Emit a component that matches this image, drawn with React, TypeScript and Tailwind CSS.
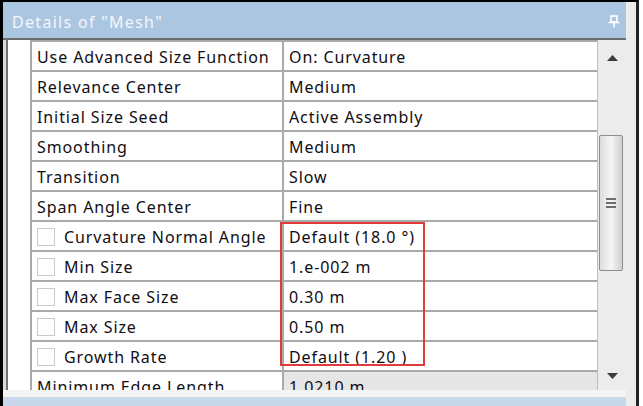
import React from "react";

type Row = { label: string; value: string; check?: boolean; readOnly?: boolean };

const rows: Row[] = [
  { label: "Use Advanced Size Function", value: "On: Curvature" },
  { label: "Relevance Center", value: "Medium" },
  { label: "Initial Size Seed", value: "Active Assembly" },
  { label: "Smoothing", value: "Medium" },
  { label: "Transition", value: "Slow" },
  { label: "Span Angle Center", value: "Fine" },
  { label: "Curvature Normal Angle", value: "Default (18.0 °)", check: true },
  { label: "Min Size", value: "1.e-002 m", check: true },
  { label: "Max Face Size", value: "0.30 m", check: true },
  { label: "Max Size", value: "0.50 m", check: true },
  { label: "Growth Rate", value: "Default (1.20 )", check: true },
  { label: "Minimum Edge Length", value: "1.0210 m", readOnly: true },
];

function PinIcon() {
  return (
    <svg width="12" height="13" viewBox="0 0 12 13" fill="none" stroke="#ffffff" strokeWidth="1.6">
      <rect x="3" y="1" width="6" height="6" />
      <line x1="0.5" y1="7.5" x2="11.5" y2="7.5" />
      <line x1="6" y1="8" x2="6" y2="12.5" />
    </svg>
  );
}

export default function App() {
  return (
    <div className="w-[643px] h-[406px] bg-white overflow-hidden flex font-['Noto_Sans',sans-serif] text-[16px] tracking-[0.9px] text-[#120d12]">
      <div className="w-[639px] h-full flex border-l-[3px] border-t-2 border-r-[3px] border-l-black border-t-black border-r-[#222]">
        {/* main column */}
        <div className="w-[623px] flex flex-col">
          {/* title bar */}
          <div className="h-[36px] bg-[#abc6e1] flex items-center justify-between pl-[9px] pr-[6px] pt-[3px]">
            <span className="text-[#f3f6fb] text-[16px] tracking-[1.3px]">Details of "Mesh"</span>
            <PinIcon />
          </div>

          {/* body */}
          <div className="h-[352px] flex border-t-2 border-[#6d6d6d] overflow-hidden">
            <div className="w-[5px] bg-[#dadada] border-r-2 border-[#707070]" />
            <div className="w-[22px] bg-white" />

            {/* property grid */}
            <div className="relative w-[567px] border-l-2 border-t-2 border-[#a9a9a9] bg-white">
              {rows.map((r) => (
                <div key={r.label} className="flex h-[30px] border-b-2 border-[#a9a9a9]">
                  <div className="w-[252px] shrink-0 border-r-2 border-[#a9a9a9] flex items-center pl-[5px] pt-[1px] whitespace-nowrap">
                    {r.check && (
                      <span className="w-[18px] h-[18px] border border-[#c9c9c9] bg-white mr-[9px]" />
                    )}
                    {r.label}
                  </div>
                  <div
                    className={
                      r.readOnly
                        ? "flex-1 flex items-center pl-[5px] pt-[1px] bg-[#e6e6e6] whitespace-nowrap"
                        : "flex-1 flex items-center pl-[5px] pt-[1px] whitespace-nowrap"
                    }
                  >
                    {r.value}
                  </div>
                </div>
              ))}
              {/* annotation box */}
              <div className="absolute left-[248px] top-[180px] w-[145px] h-[144px] border-2 border-[#e03a3a]" />
            </div>

            {/* scrollbar */}
            <div className="w-[29px] bg-[#ececec] border-l border-[#bdbdbd] flex flex-col">
              <div className="h-[34px] flex items-center justify-center pt-[2px]">
                <svg width="11" height="6" viewBox="0 0 11 6">
                  <path d="M5.5 0 L11 6 L0 6 Z" fill="#3c3c3c" />
                </svg>
              </div>
              <div className="h-[61px]" />
              <div className="h-[136px] w-[24px] ml-[1px] rounded-[2px] border border-[#8e8e8e] bg-gradient-to-r from-[#dcdcdc] via-[#f6f6f6] to-[#cfcfcf] flex flex-col items-center justify-center gap-[2px]">
                <div className="w-[10px] h-[2px] bg-[#6e6e6e]" />
                <div className="w-[10px] h-[2px] bg-[#6e6e6e]" />
                <div className="w-[10px] h-[2px] bg-[#6e6e6e]" />
              </div>
              <div className="flex-1" />
              <div className="h-[28px] flex items-center justify-center">
                <svg width="11" height="6" viewBox="0 0 11 6">
                  <path d="M0 0 L11 0 L5.5 6 Z" fill="#3c3c3c" />
                </svg>
              </div>
            </div>
          </div>

          <div className="h-[7px] bg-[#f4f4f4]" />
          <div className="flex-1 bg-[#c8d8ea]" />
        </div>
        <div className="flex-1 bg-[#ececec]" />
      </div>
    </div>
  );
}
